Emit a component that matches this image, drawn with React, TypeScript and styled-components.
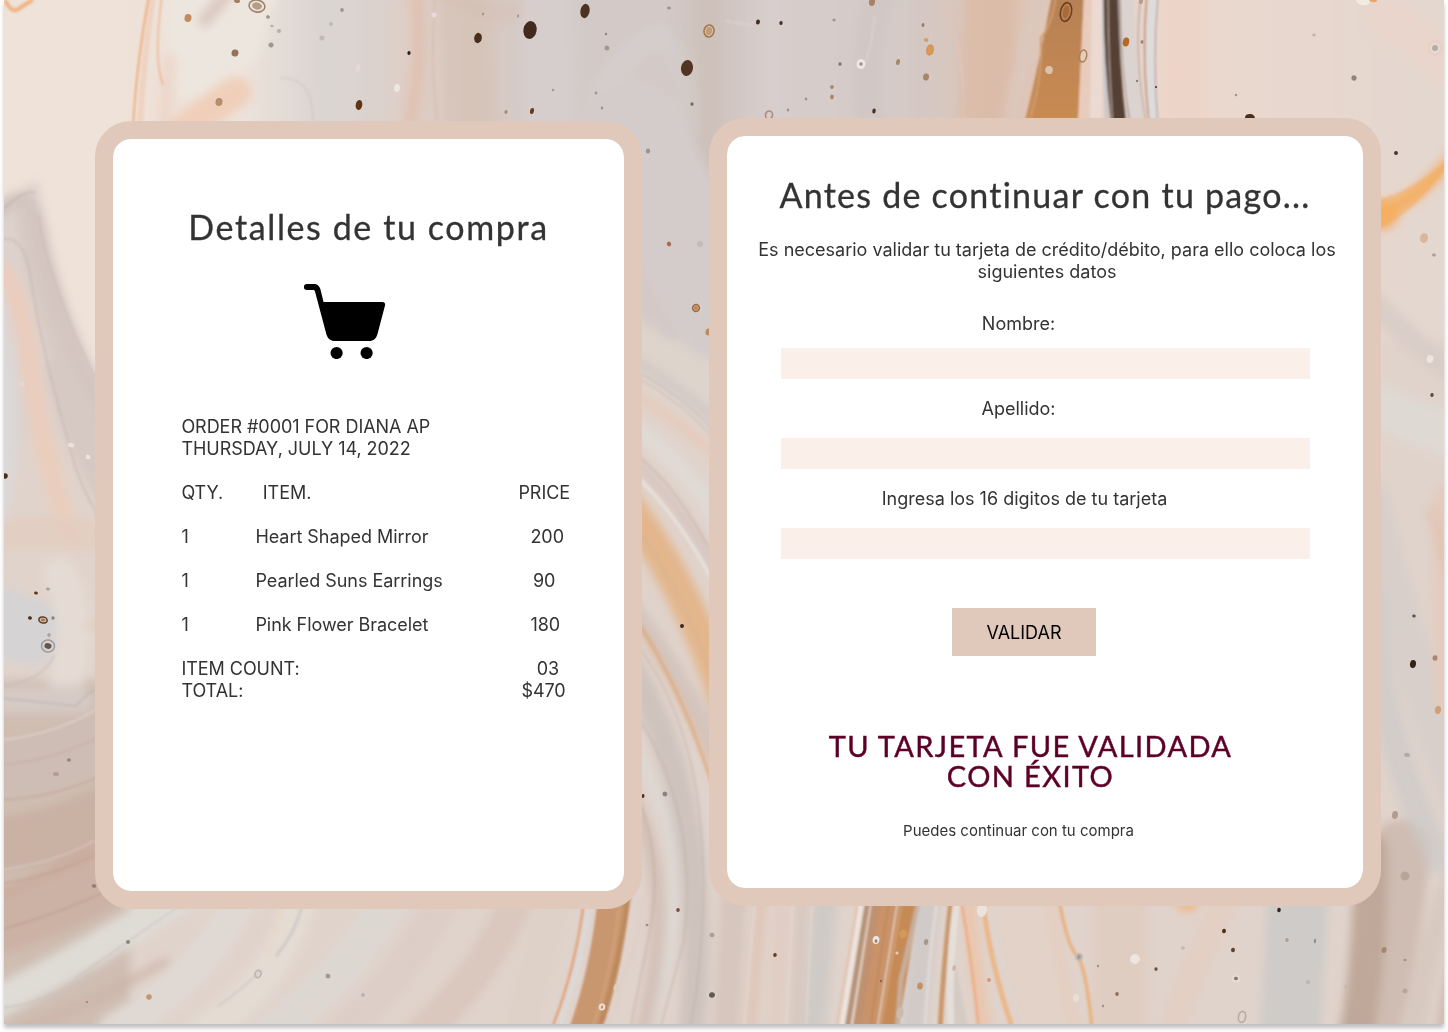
import React from "react";
import styled, { createGlobalStyle } from "styled-components";

const GlobalStyle = createGlobalStyle`
  * { box-sizing: border-box; }
  body { margin: 0; background: #fff; }
`;

const Screen = styled.main`
  position: relative;
  display: flex;
  align-items: flex-start;
  gap: 67px;
  width: 1440px;
  height: 1024px;
  margin: 0 4px 8px;
  padding: 118px 0 0 91px;
  background: #e0d3cb;
  box-shadow: 0 4px 4px rgba(0, 0, 0, 0.25);
  font-family: Inter, "Liberation Sans", sans-serif;
  font-size: 18px;
  line-height: 22px;
  color: #333;
`;

const Backdrop = styled.svg`
  position: absolute;
  inset: 0;
  display: block;
`;

const Card = styled.section<{ $width: number; $top?: number; $pad: string }>`
  position: relative;
  flex: none;
  display: flex;
  flex-direction: column;
  width: ${(p) => p.$width}px;
  height: 788px;
  margin-top: ${(p) => p.$top ?? 0}px;
  padding: ${(p) => p.$pad};
  border: 18px solid #e0c8bb;
  border-radius: 36px;
  background: #fff;
  background-clip: padding-box;
`;

const Title = styled.h1<{ $spacing: number }>`
  margin: 0;
  font: 400 34px/44px Lato, sans-serif;
  letter-spacing: ${(p) => p.$spacing}px;
  text-align: center;
  white-space: nowrap;
  -webkit-text-stroke: 0.3px #333;
`;

const CartIcon = styled.svg`
  display: block;
  width: 82px;
  height: 75px;
  margin: 35px 0 57px 191px;
`;

const Receipt = styled.div`
  display: flex;
  flex-direction: column;
  gap: 22px;
  padding-left: 68.4px;
  letter-spacing: -0.04px;
  white-space: nowrap;
`;

const Row = styled.div`
  display: grid;
  grid-template-columns: 74px 263px 1fr;
`;

const Cell = styled.span<{ $indent?: number }>`
  padding-left: ${(p) => p.$indent ?? 0}px;
`;

const WideCell = styled.span`
  grid-column: 1 / 3;
`;

const Intro = styled.p`
  margin: 22px 0 30px;
  padding-left: 4px;
  text-align: center;
`;

const Field = styled.label<{ $gap: number; $shift: number; $after: number }>`
  display: flex;
  flex-direction: column;
  gap: ${(p) => p.$gap}px;
  margin-bottom: ${(p) => p.$after}px;
  span {
    padding-right: ${(p) => p.$shift}px;
    text-align: center;
  }
`;

const Input = styled.input`
  align-self: center;
  width: 529px;
  height: 31px;
  padding: 0 8px;
  border: 0;
  outline: 0;
  background: #fbefea;
  font: inherit;
`;

const SubmitButton = styled.button`
  align-self: center;
  width: 144px;
  height: 48px;
  margin-right: 42px;
  padding: 2px 0 0;
  border: 0;
  background: #e0c8bb;
  color: #000;
  font: inherit;
`;

const Success = styled.h2`
  margin: 75px 0 29px;
  padding-right: 29px;
  color: #5c0028;
  font: 400 29px/30px Lato, sans-serif;
  letter-spacing: 1.38px;
  text-align: center;
  -webkit-text-stroke: 0.45px #5c0028;
`;

const Note = styled.p`
  margin: 0;
  padding-right: 53px;
  font-size: 15px;
  text-align: center;
`;

type Band = [d: string, color: string, width: number, opacity?: number];

const softBands: Band[] = [
  ["M440 -10 Q480 20 520 10", "#d7bfb5", 20, 0.5],
  ["M230 -10 L205 20", "#d6c2ba", 14, 0.8],
  ["M175 138 Q205 112 236 92", "#f1cab2", 32, 0.8],
  ["M162 140 L170 60", "#edd3c6", 14, 0.7],
  ["M415 -10 Q425 60 408 130", "#dfbfae", 14, 0.8],
  ["M465 -10 L470 130", "#d3c1b6", 50, 0.6],
  ["M545 -10 L550 130", "#d8d1d0", 50, 0.6],
  ["M600 100 Q625 50 660 35 Q690 60 685 130", "#d8d4d3", 24, 0.35],
  ["M880 -10 Q860 50 870 130", "#cfc6c4", 30, 0.7],
  ["M990 -10 L985 130", "#dbb9a6", 52, 0.75],
  ["M1040 -10 Q1018 70 1010 130", "#dcc7bd", 15],
  ["M1185 -10 L1185 130", "#eed3c6", 45, 0.7],
  ["M1388 20 Q1435 48 1450 70", "#eed3c7", 40, 0.5],
  ["M0 210 Q28 185 38 225 Q55 320 112 420", "#cfc0bb", 16, 0.8],
  ["M30 220 Q52 340 112 470 M60 370 Q75 440 112 500", "#d3c4bf", 26, 0.75],
  ["M0 270 Q22 290 32 380 Q44 460 72 540", "#ecccba", 20, 0.85],
  ["M-10 300 Q18 410 -10 540", "#dcd8d8", 28],
  ["M-20 540 Q50 520 130 545", "#e4cdc0", 30, 0.8],
  ["M0 620 L28 632", "#d4d3d5", 66, 0.9],
  ["M60 575 Q84 620 66 680", "#e6ddd6", 34, 0.8],
  ["M112 620 L86 626", "#e6c8b8", 6, 0.8],
  ["M0 700 L80 700", "#d6cac5", 26],
  ["M-10 770 Q60 765 120 725", "#cebdb4", 56],
  ["M-10 845 Q60 840 130 800", "#c9b1a4", 55],
  ["M-10 925 Q75 900 140 850", "#ccb2a5", 66],
  ["M0 895 L110 845", "#c9a28b", 10, 0.4],
  ["M-10 1006 Q100 950 190 890", "#dfdcd6", 32],
  ["M20 1030 Q90 1005 165 962", "#ccb1a6", 8, 0.8],
  ["M115 1030 Q200 980 240 900", "#e0d9d3", 34],
  ["M300 900 Q280 980 205 1032", "#e4dbd3", 34],
  ["M390 900 Q350 970 270 1035", "#ddd7d1", 38],
  ["M520 890 Q490 970 420 1035", "#d5c0b6", 34, 0.6],
  ["M448 890 Q410 970 340 1035", "#dacac3", 32, 0.5],
  ["M560 890 Q535 960 520 1035", "#ded1c8", 35],
  ["M632 130 L720 310", "#d4cccb", 100],
  ["M600 320 L740 420", "#ddd4cc", 48],
  ["M600 340 Q690 390 740 445", "#d3c8c4", 10],
  ["M600 375 Q690 420 740 485", "#e8c8b5", 7],
  ["M600 405 Q690 455 740 560", "#e0dad5", 18],
  ["M600 430 Q690 500 740 620", "#d5c4be", 10],
  ["M600 470 Q685 570 730 715", "#e3b68c", 32],
  ["M600 565 Q690 680 740 800", "#d3c5be", 18],
  ["M600 575 Q690 690 740 840", "#deb799", 4],
  ["M600 620 Q720 780 690 1040", "#cfc3be", 26],
  ["M600 700 Q690 810 672 930 Q665 980 645 1040", "#ddd8d4", 10],
  ["M600 750 Q690 850 640 1040", "#d3c0b6", 14],
  ["M735 880 L725 1040", "#d6c6bd", 26],
  ["M763 880 L750 1040", "#dfc3b3", 9],
  ["M784 880 L775 1040", "#e0cdc4", 16],
  ["M803 880 L795 1040", "#d2c1b8", 7],
  ["M827 880 L813 1040", "#cfcac6", 24],
  ["M930 880 L912 1040", "#d0cac8", 24],
  ["M968 880 Q974 970 988 1040", "#ecc4aa", 11],
  ["M1022 880 Q1022 960 1050 1040", "#e2d2c7", 48],
  ["M1050 880 Q1060 980 1080 1040", "#e8cbbb", 9, 0.8],
  ["M1120 880 L1120 1040", "#e0cdc2", 56],
  ["M1185 880 L1187 900", "#edb98a", 24],
  ["M1170 1040 Q1185 980 1235 880", "#e4cdc0", 26, 0.7],
  ["M1300 860 L1290 1040", "#cecbc8", 60],
  ["M1400 850 Q1390 960 1362 1060", "#cbb7ac", 60, 0.8],
  ["M1370 850 Q1372 960 1352 1060", "#bfa799", 34],
  ["M1460 870 Q1435 900 1410 1060", "#d8c9c0", 22],
  ["M1455 950 L1436 1060", "#cdb6aa", 10],
  ["M1370 300 Q1410 340 1460 380", "#d8cdc7", 24, 0.9],
  ["M1455 290 Q1440 320 1460 330", "#e3d9d3", 22],
  ["M1360 400 L1460 440", "#ded9d3", 44],
  ["M1370 500 Q1390 600 1460 800", "#d8cfca", 40],
  ["M1370 600 Q1380 740 1440 860", "#cbcac8", 28, 0.65],
  ["M1450 500 L1452 700", "#e4cabd", 34, 0.9],
  ["M1430 510 L1455 590", "#e1bfae", 10, 0.6],
  ["M1366 217 L1384 215", "#f3b067", 30, 0.9],
  ["M1370 216 Q1415 205 1455 154", "#f3b067", 14, 0.9],
];

const sharpBands: Band[] = [
  ["M149 -5 Q137 60 133 125", "#efa267", 1.6],
  ["M162 -5 Q153 60 163 85", "#efab78", 1.5, 0.8],
  ["M153 -5 Q143 60 140 125", "#efc8b0", 6, 0.55],
  ["M5 0 Q12 15 20 8 Q27 3 33 0", "#f2ae78", 4, 0.9],
  ["M0 212 Q25 188 35 193", "#b7a7a3", 1.6, 0.45],
  ["M0 240 Q25 232 31 282 Q44 360 68 440 Q80 495 112 535", "#b9aaa8", 1.8, 0.4],
  ["M38 215 Q52 300 112 410", "#c2b1ad", 2, 0.35],
  ["M0 687 Q45 680 54 655", "#bdb8ba", 2, 0.5],
  ["M0 698 Q40 702 76 706 Q90 690 96 690", "#b9b0af", 2.2, 0.5],
  ["M0 740 Q60 735 112 700", "#e1d7d0", 2, 0.7],
  ["M0 765 Q60 760 112 730", "#bba89e", 1.6, 0.4],
  ["M0 800 Q60 798 112 770", "#b79b8e", 2, 0.35],
  ["M0 870 Q65 862 112 830", "#dfccc0", 2, 0.6],
  ["M0 884 Q65 874 112 846", "#b6937f", 2, 0.3],
  ["M0 930 Q65 912 112 888", "#b18f7e", 2, 0.3],
  ["M0 1008 Q48 1004 92 972", "#c9c0bb", 2, 0.7],
  ["M75 978 L178 907", "#bab4af", 1, 0.7],
  ["M303 902 Q296 932 276 956", "#b7b8bd", 3, 0.45],
  ["M262 970 Q235 995 218 1006", "#c9c2bf", 2, 0.6],
  ["M282 902 Q273 935 268 955", "#efd6c4", 3, 0.5],
  ["M584 900 Q576 968 552 1028", "#e3a27a", 2.5],
  ["M590 900 Q581 968 558 1028", "#dad8d8", 5],
  ["M614 895 Q607 970 584 1034", "#c8976f", 32],
  ["M620 895 Q614 970 590 1034", "#d3a379", 3, 0.7],
  ["M629 895 Q620 960 601 1024", "#b8804e", 5, 0.6],
  ["M645 895 Q635 960 624 970 Q620 1005 604 1030", "#ded1c9", 7, 0.8],
  ["M280 78 Q315 76 313 125", "#b9b1af", 1.5, 0.3],
  ["M435 -5 Q430 60 437 125", "#cda99b", 2, 0.3],
  ["M725 20 Q731 23 752 25 M875 15 Q872 45 866 60", "#e3dcda", 2, 0.5],
  ["M940 -5 Q970 60 962 125", "#e7c4b2", 2, 0.6],
  ["M1056 -5 Q1052 25 1041 38 Q1043 80 1028 125", "#cf9b70", 2],
  ["M1088 -5 L1082 125", "#e9cbbb", 8],
  ["M1098 -5 L1096 125", "#ecd9d2", 12],
  ["M1104 -5 Q1103 65 1108 125", "#c9c6c7", 4],
  ["M1111 -5 Q1111 60 1119 128", "#554034", 15],
  ["M1108 -5 Q1108 60 1113 128", "#b6a498", 1.3],
  ["M1119 -5 Q1121 60 1131 128", "#a89a91", 3],
  ["M1128 -5 Q1126 60 1138 128", "#dad3cf", 13],
  ["M1141 -5 Q1133 55 1147 128", "#c3b6b2", 2],
  ["M1147 -5 Q1141 60 1150 128", "#bd927a", 1.6],
  ["M1153 -5 Q1147 60 1154 128", "#dcdcdd", 7],
  ["M1158 -5 Q1152 60 1158 128", "#a9928a", 1],
  ["M630 368 Q685 395 720 438 M630 374 Q685 402 720 446", "#b3a6a2", 1, 0.5],
  ["M630 470 Q680 515 720 595", "#e8e2dd", 4, 0.8],
  ["M630 450 Q680 485 720 570", "#c7a99e", 2, 0.4],
  ["M630 520 Q693 600 720 705", "#c7b5aa", 2, 0.3],
  ["M630 610 Q685 690 720 810", "#dfa579", 4, 0.55],
  ["M630 635 Q690 710 700 820 Q710 920 690 1030", "#b9aaa3", 2, 0.35],
  ["M630 705 Q700 805 684 940 L660 1030", "#c0afa5", 2, 0.45],
  ["M630 780 Q665 850 650 930 L630 1030", "#b6a097", 2, 0.35],
  ["M755 900 L744 1030 M793 900 L786 1030 M812 900 L806 1030", "#e5d8d1", 2, 0.7],
  ["M858 900 L836 1030", "#e4c1ad", 2],
  ["M862 900 L841 1030", "#eee4de", 4],
  ["M868 900 L847 1030", "#b69377", 5],
  ["M877 900 L857 1030", "#bf916f", 9],
  ["M889 900 L868 1030", "#ca9267", 16],
  ["M909 900 L888 1030", "#c68a56", 20],
  ["M889 900 L870 1030", "#a66f43", 1, 0.5],
  ["M902 900 L880 1030", "#daad88", 2, 0.6],
  ["M919 900 L901 980 L897 1030", "#c7b6ad", 5, 0.8],
  ["M937 900 Q928 965 925 1030", "#dfd9d7", 3],
  ["M951 900 Q943 970 940 1030", "#cb986c", 5],
  ["M957 900 Q948 960 951 1030", "#e5dfd9", 7],
  ["M961 900 Q972 960 979 1030", "#edb088", 3],
  ["M983 900 Q989 960 1013 1030", "#eeb07c", 5, 0.8],
  ["M987 908 Q1001 966 1027 1030", "#ded6ce", 3, 0.7],
  ["M1059 900 Q1068 950 1079 958 Q1088 980 1092 1030", "#e8b383", 3.5],
];

const solids: { d: string; fill: string; opacity?: number }[] = [
  { d: "M1052 -5H1084L1078 125H1024Q1040 60 1052 -5Z", fill: "url(#amber)" },
  { d: "M950 935Q960 985 968 1028H947Q945 960 950 935Z", fill: "#d4cbc4" },
  { d: "M1375 200Q1410 194 1450 157V163Q1415 213 1375 231Z", fill: "#f6ac55", opacity: 0.5 },
];

type Speck = [x: number, y: number, rx: number, ry: number, color: string];
const dark = "#4a2d1b";
const tan = "#c18b5d";
const grey = "#a0968f";
const pale = "#eee7e0";

const specks: Speck[] = [
  [237, 1, 3, 2, "#a67c62"], [188, 18, 3.5, 4, tan], [268, 17, 2, 1.7, grey],
  [272, 26, 1.8, 1.2, "#b7aea8"], [279, 31, 2, 2, "#b7aea8"], [271, 45, 2.5, 2.5, grey],
  [342, 10, 1.8, 2, grey], [331, 24, 2, 2, "#c0b9b6"], [322, 38, 2.5, 2.5, "#c0b9b6"],
  [235, 53, 3.5, 3.5, "#95705a"], [219, 102, 3.5, 4, "#b68c69"], [409, 53, 1.6, 2, "#22201c"],
  [397, 88, 3, 4, pale], [358, 68, 2, 4, "#e7dad4"], [359, 105, 3.3, 5, "#603519"],
  [478, 38, 3.8, 5.2, dark], [530, 30, 6.6, 9, "#3f2b1c"], [585, 11, 4.6, 7.2, "#4c3121"],
  [687, 68, 6, 8, "#513522"], [532, 111, 2, 3, "#653a1d"], [506, 112, 1.5, 2, "#ad8570"],
  [607, 48, 2.4, 2.4, grey], [606, 34, 1.2, 1.3, "#8b8582"], [483, 14, 1, 1.5, grey],
  [518, 16, 1, 1.7, grey], [669, 8, 2, 1.5, grey], [692, 104, 1.6, 1.8, "#75675d"],
  [596, 93, 1.4, 1.4, grey], [602, 108, 1.4, 1.4, grey], [553, 90, 1.2, 1.2, grey],
  [434, 15, 2.5, 2.5, "#e7dcd7"], [758, 22, 2, 2.5, dark], [781, 23, 1.7, 2, dark],
  [872, 2, 3, 4, "#a68266"], [834, 20, 1.6, 1.4, grey], [923, 25, 1.4, 2, "#987965"],
  [926, 40, 2.4, 2, "#cea079"], [840, 64, 1.6, 1.8, "#7c7370"], [861, 64, 4.5, 5, "#eee7e3"],
  [861, 64, 1.8, 1.8, grey], [898, 62, 2, 3, "#a88668"], [926, 77, 3, 3.6, "#a88668"],
  [832, 87, 1.8, 2, "#a88668"], [832, 97, 1.9, 2.4, "#a88668"], [874, 111, 1.7, 2.5, dark],
  [788, 110, 1.3, 1.5, grey], [806, 99, 1.3, 1.4, "#a79082"], [1049, 70, 3.8, 4, "#dec1ab"],
  [1126, 42, 3.2, 4.6, "#b36b28"], [1141, 1, 2, 3, "#ba9b85"], [1142, 42, 1.5, 1.7, "#9a8279"],
  [1137, 81, 1, 1.2, "#87736a"], [1156, 87, 1, 1, dark], [1314, 35, 1.6, 1.6, "#bdb5b0"],
  [1354, 78, 2.6, 2.6, "#908279"], [1236, 95, 1.3, 1.3, grey], [1250, 118, 5, 4, dark],
  [1363, 1, 7, 4, "#f2ebe4"], [1373, 0, 4, 2, "#eba367"], [1435, 48, 8, 8, "#eccfc3"],
  [1435, 48, 5.5, 5.5, "#e5dad4"], [1435, 48, 3, 3, "#b6aca7"], [5, 476, 2.8, 2.8, dark],
  [36, 593, 2, 1.5, "#633718"], [48, 589, 2, 1.5, "#aaa29d"], [30, 618, 2, 1.7, dark],
  [53, 618, 1.7, 1.7, "#8d837e"], [49, 635, 1.7, 2, "#aaa29d"], [69, 760, 2, 1.8, "#97867c"],
  [56, 774, 3, 2, "#ba9c8d"], [128, 942, 2, 2, "#8b8680"], [149, 997, 2.8, 2.8, "#c59670"],
  [22, 384, 3, 2.5, "#e7d8cf"], [71, 445, 3.2, 2.4, "#ebe1dc"], [88, 457, 2.5, 2.4, "#ebe1dc"],
  [94, 886, 2.3, 1.8, "#977c72"], [87, 1002, 1.1, 1.1, "#9c8277"], [1396, 153, 2, 2, "#49382f"],
  [1424, 238, 4, 5, "#d9b79e"], [1434, 255, 2, 1.5, "#ac9e96"], [1430, 359, 3.4, 4, "#eee4df"],
  [1432, 395, 1.7, 2, "#5d463b"], [1414, 616, 1.8, 1.5, "#60534b"], [1413, 664, 3, 4, "#352317"],
  [1435, 658, 2.5, 2.7, "#ac8770"], [1438, 710, 3, 4, "#d0a070"], [1407, 755, 3, 2, "#b2aaa5"],
  [1395, 815, 3, 4, "#b49c8e"], [1405, 876, 4.5, 4.5, "#b8a599"], [1384, 950, 2.5, 3, "#a6876b"],
  [1405, 991, 2.5, 2.5, "#b4a59d"], [648, 151, 2.2, 2.5, "#9c948c"], [669, 244, 2.2, 2.4, "#ad6b4b"],
  [708, 332, 2.5, 3.5, tan], [700, 244, 3, 3, "#c4bab9"], [682, 626, 2, 2, "#352923"],
  [665, 794, 2.4, 2.4, "#8c837c"], [643, 796, 1.5, 2, dark], [678, 910, 1.8, 2, "#814e3b"],
  [712, 935, 2.5, 2.2, "#a99d96"], [647, 925, 1.5, 1.3, "#a28c81"], [617, 988, 3.3, 4, "#decfc3"],
  [602, 1007, 3.3, 3.5, "#eadfd5"], [602, 1007, 1.2, 1.8, "#b79981"], [328, 976, 2.4, 2.4, grey],
  [363, 995, 2, 2, "#bcb4b2"], [775, 955, 1.8, 2, "#693c1d"], [876, 940, 3.4, 4, pale],
  [876, 941, 1.4, 1.8, "#9b8069"], [903, 934, 3.8, 4.5, "#d79857"], [926, 942, 2.2, 3, "#a9978d"],
  [897, 953, 1.5, 1.5, "#e4cdb9"], [920, 986, 2.8, 3.5, "#c2915f"], [881, 981, 1, 1.2, "#8e5d3b"],
  [900, 1013, 3.5, 6, "#cbbaad"], [954, 968, 1.6, 3, "#d6afa0"], [982, 910, 5, 7, "#ece4dc"],
  [989, 980, 2, 2, "#d99a6b"], [1079, 957, 4, 4.2, "#c8bdb6"], [1079, 957, 2, 2.4, "#a79b95"],
  [1076, 998, 3, 4, "#eaded8"], [1098, 966, 1.2, 1.3, grey], [1135, 959, 5, 5, "#eee5df"],
  [1117, 994, 1.8, 2, "#8f6f5b"], [1103, 1006, 1.2, 1.4, grey], [1156, 969, 1.6, 1.8, "#714832"],
  [1183, 948, 2, 1.6, "#c9b4aa"], [1224, 931, 2, 2.3, "#51301b"], [1233, 950, 2, 2.2, "#66402c"],
  [1236, 979, 4, 3.6, "#e7ddd7"], [1236, 978.5, 2, 1.8, "#8a7367"], [1279, 910, 1.8, 2.2, "#342820"],
  [1287, 940, 1.7, 2, "#ac9e97"], [1315, 941, 1.2, 2.2, "#94908d"], [1405, 960, 1.3, 1.3, "#9c8b81"],
  [1346, 987, 1.7, 2.5, "#cab9a9"], [1308, 982, 2.3, 2, "#bdb8b5"],
];

const rings: Speck[] = [
  [257, 6, 8, 6, "#a18068"], [709, 31, 5, 6, "#a5784e"], [930, 50, 3, 4.8, "#cd8c4b"],
  [1066, 12, 5.5, 9.5, "#6e3f1d"], [1083, 56, 3.6, 6, "#ad815a"], [769, 115, 3.5, 4, "#a98f7a"],
  [43, 620, 4.2, 3, "#613d22"], [48, 646, 6.5, 6, "#a59d98"], [696, 308, 3.3, 3.5, "#9b6b45"],
  [258, 974, 3, 3.7, "#bbb4ad"], [1242, 1017, 3.6, 5.5, "#b7aaa2"],
];

const cores: Speck[] = [
  [257, 6, 5, 3.6, "#b59c88"], [709, 31, 3, 4, "#c49a70"], [930, 50, 2.8, 4.5, "#dc9852"],
  [1066, 12, 3, 6.5, "#a76a38"], [1083, 56, 2.2, 4.2, "#e3cfc1"], [43, 620, 2.4, 1.5, "#ad7547"],
  [48, 646, 3.6, 2.8, "#66554b"], [696, 308, 2.7, 2.8, "#c38c5d"],
  [712, 995, 5.5, 5.5, "#d9d0c8"], [712, 995, 3, 2.7, "#665950"],
];

const Marble = () => (
  <Backdrop width="1440" height="1024" viewBox="4 0 1440 1024" aria-hidden="true">
    <defs>
      <linearGradient id="ceiling" gradientUnits="userSpaceOnUse" x1="0" x2="1448" y1="0" y2="0">
        <stop offset="0" stopColor="#eee2d9" />
        <stop offset="0.1" stopColor="#eee1d8" />
        <stop offset="0.17" stopColor="#ebe2db" />
        <stop offset="0.22" stopColor="#dbd5d1" />
        <stop offset="0.25" stopColor="#dad3cf" />
        <stop offset="0.28" stopColor="#dfcec6" />
        <stop offset="0.33" stopColor="#d8c8be" />
        <stop offset="0.37" stopColor="#d3cbc9" />
        <stop offset="0.46" stopColor="#d3c9c7" />
        <stop offset="0.49" stopColor="#cdc0b9" />
        <stop offset="0.53" stopColor="#d7cecd" />
        <stop offset="0.63" stopColor="#d4c9c5" />
        <stop offset="0.7" stopColor="#ddc2b2" />
        <stop offset="0.8" stopColor="#ebd8ce" />
        <stop offset="1" stopColor="#e3d7cf" />
      </linearGradient>
      <linearGradient id="amber" x1="0" x2="0" y1="0" y2="1">
        <stop offset="0" stopColor="#b58154" />
        <stop offset="1" stopColor="#ca8b53" />
      </linearGradient>
      <filter id="soft" filterUnits="userSpaceOnUse" x="-30" y="-40" width="1510" height="1110">
        <feGaussianBlur stdDeviation="5" />
      </filter>
      <filter id="fine" filterUnits="userSpaceOnUse" x="-30" y="-40" width="1510" height="1110">
        <feGaussianBlur stdDeviation="0.9" />
      </filter>
      <filter id="dot" filterUnits="userSpaceOnUse" x="0" y="-20" width="1450" height="1060">
        <feGaussianBlur stdDeviation="0.5" />
      </filter>
    </defs>
    <g filter="url(#soft)" fill="none" strokeLinecap="round">
      <rect x="-30" y="-40" width="1510" height="380" fill="url(#ceiling)" />
      <path d="M-30 680H130V1060H-30Z" fill="#cfbdb2" />
      <path d="M-30 190L40 180Q60 330 120 410V440H-30Z" fill="#ddd1cc" />
      <path d="M167 -30H285L262 45Q245 90 180 100Q160 60 167 -30Z" fill="#ede6de" />
      <path d="M-30 -30H130V440Q60 340 38 180L-30 215Z" fill="#eee2d9" />
      {softBands.map(([d, color, width, opacity], i) => (
        <path key={i} d={d} stroke={color} strokeWidth={width} opacity={opacity} />
      ))}
    </g>
    <g filter="url(#fine)">
      {solids.map((s) => (
        <path key={s.d} d={s.d} fill={s.fill} opacity={s.opacity} />
      ))}
      {sharpBands.map(([d, color, width, opacity], i) => (
        <path key={i} d={d} fill="none" stroke={color} strokeWidth={width} opacity={opacity} />
      ))}
    </g>
    <g filter="url(#dot)">
      {specks.map(([x, y, rx, ry, color], i) => (
        <ellipse key={i} cx={x} cy={y} rx={rx} ry={ry} fill={color} transform={`rotate(10 ${x} ${y})`} />
      ))}
      {rings.map(([x, y, rx, ry, color], i) => (
        <ellipse key={i} cx={x} cy={y} rx={rx} ry={ry} fill="none" stroke={color} strokeWidth="1.6" transform={`rotate(12 ${x} ${y})`} />
      ))}
      {cores.map(([x, y, rx, ry, color], i) => (
        <ellipse key={i} cx={x} cy={y} rx={rx} ry={ry} fill={color} transform={`rotate(12 ${x} ${y})`} />
      ))}
    </g>
  </Backdrop>
);

const items = [
  { qty: 1, name: "Heart Shaped Mirror", price: "200", indent: 12 },
  { qty: 1, name: "Pearled Suns Earrings", price: "90", indent: 14.5 },
  { qty: 1, name: "Pink Flower Bracelet", price: "180", indent: 12 },
];

export default function App() {
  return (
    <>
      <GlobalStyle />
      <Screen>
        <Marble />
        <Card $width={547} $top={3} $pad="66px 0 0">
          <Title $spacing={1.6}>Detalles de tu compra</Title>
          <CartIcon viewBox="304 284 82 75">
            <path d="M306.8 284H313.5C317.5 284 319.5 286 320.5 289.5L323.5 302H382.5C384.5 302 385.6 303.5 385 305.5L377.5 334C376.3 338.5 373.5 341 369 341H335C330.5 341 327.5 338.5 326.3 334L315 291.5C314.6 290.3 314 290 313 290H306.8A3 3 0 0 1 306.8 284Z" />
            <circle cx="336.6" cy="353" r="6.1" />
            <circle cx="366.6" cy="353" r="6.1" />
          </CartIcon>
          <Receipt>
            <div>
              ORDER #0001 FOR DIANA AP
              <br />
              THURSDAY, JULY 14, 2022
            </div>
            <Row>
              <Cell>QTY.</Cell>
              <Cell $indent={7.4}>ITEM.</Cell>
              <Cell>PRICE</Cell>
            </Row>
            {items.map((item) => (
              <Row key={item.name}>
                <Cell>{item.qty}</Cell>
                <Cell>{item.name}</Cell>
                <Cell $indent={item.indent}>{item.price}</Cell>
              </Row>
            ))}
            <div>
              <Row>
                <WideCell>ITEM COUNT:</WideCell>
                <Cell $indent={18.4}>03</Cell>
              </Row>
              <Row>
                <WideCell>TOTAL:</WideCell>
                <Cell $indent={3}>$470</Cell>
              </Row>
            </div>
          </Receipt>
        </Card>
        <Card $width={672} $pad="37px 0 0">
          <Title $spacing={1.25}>Antes de continuar con tu pago...</Title>
          <Intro>
            Es necesario validar tu tarjeta de crédito/débito, para ello coloca los
            <br />
            siguientes datos
          </Intro>
          <Field $gap={13} $shift={53} $after={19}>
            <span>Nombre:</span>
            <Input />
          </Field>
          <Field $gap={18} $shift={53} $after={19}>
            <span>Apellido:</span>
            <Input />
          </Field>
          <Field $gap={18} $shift={41} $after={49}>
            <span>Ingresa los 16 digitos de tu tarjeta</span>
            <Input />
          </Field>
          <SubmitButton>VALIDAR</SubmitButton>
          <Success>
            TU TARJETA FUE VALIDADA
            <br />
            CON ÉXITO
          </Success>
          <Note>Puedes continuar con tu compra</Note>
        </Card>
      </Screen>
    </>
  );
}
